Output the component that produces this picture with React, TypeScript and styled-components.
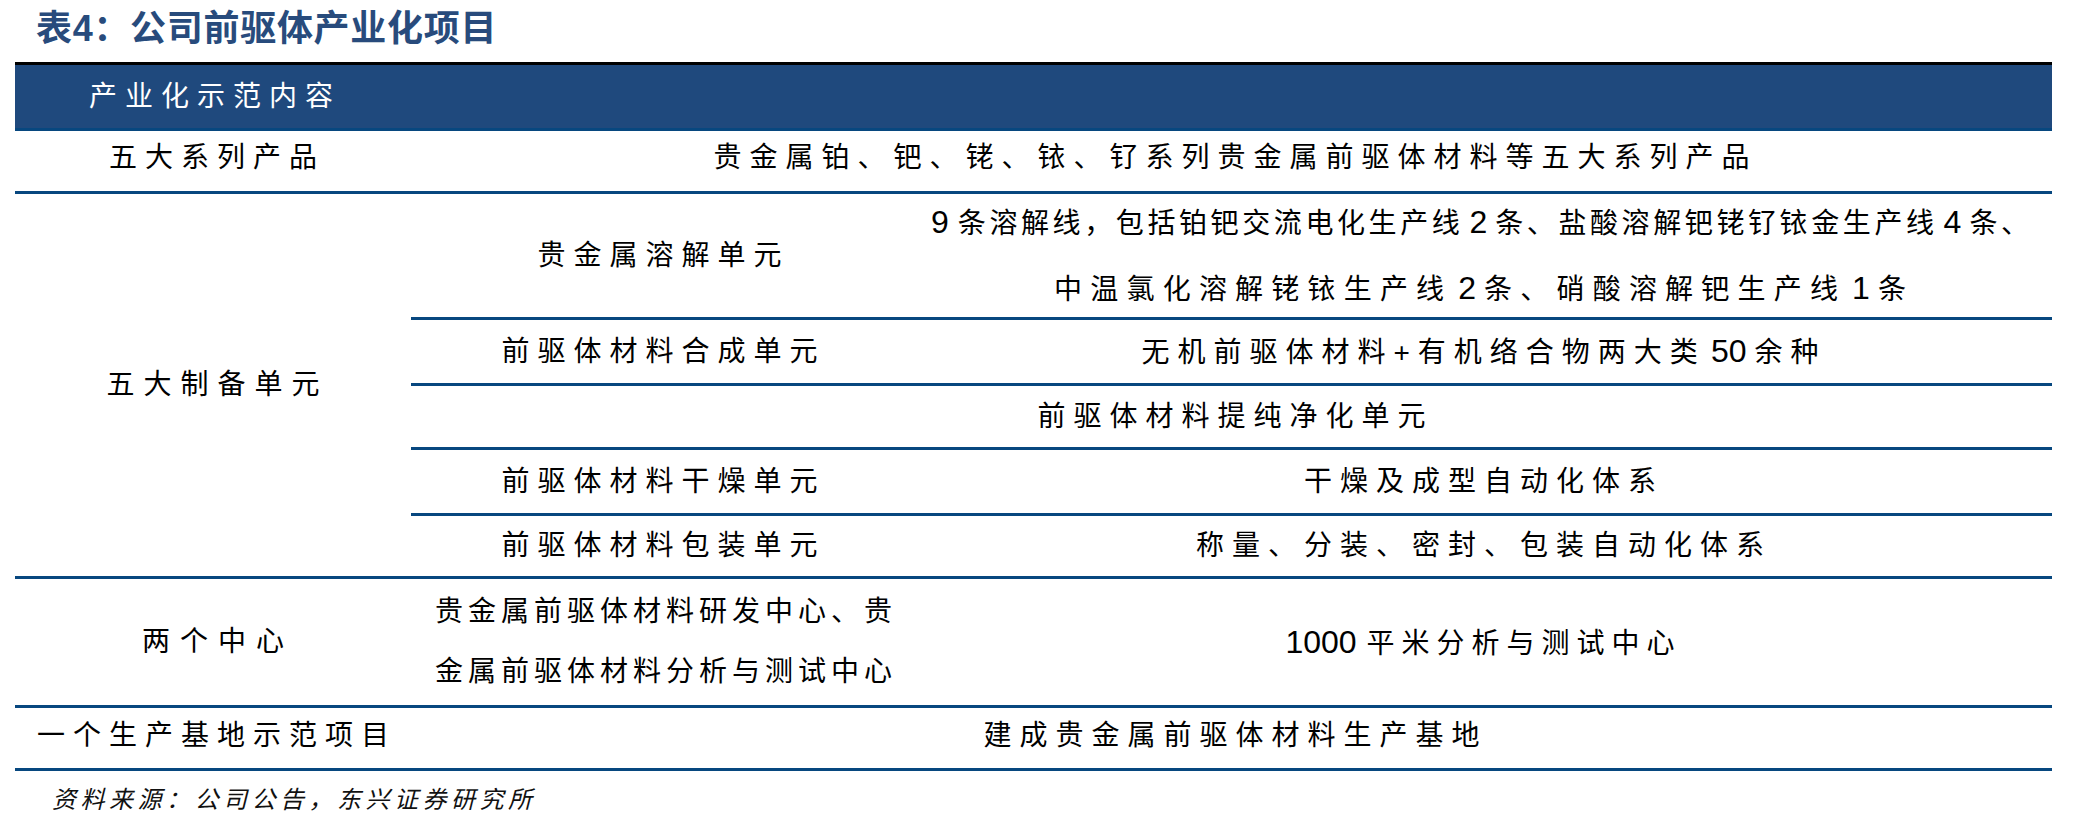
import React from 'react'
import styled, { createGlobalStyle } from 'styled-components'

const lineBlue = '#07477f'

const GlobalStyle = createGlobalStyle`
  body {
    margin: 0;
    background: #fff;
    font-family: "Liberation Sans", "Noto Sans CJK SC", sans-serif;
    color: #000;
  }
`

const Page = styled.div`
  width: 2083px;
  padding-left: 15px;
  box-sizing: border-box;
`

const Title = styled.h1`
  margin: 0;
  height: 62px;
  padding: 0 0 4px 21px;
  box-sizing: border-box;
  display: flex;
  align-items: center;
  font-size: 36px;
  font-weight: 700;
  line-height: 1.2;
  letter-spacing: 0.7px;
  color: #284b7c;
`

const Table = styled.div`
  display: grid;
  width: 2037px;
  grid-template-columns: 396px 497px 1144px;
  grid-template-rows: 66px 63px 126px 66px 64px 66px 63px 129px 63px;
  border-top: 3px solid #000;
  font-size: 28px;
  line-height: 1.2;
`

type cellProps = {
  $span?: number
  $rows?: number
  $left?: boolean
  $pad?: number
  $lift?: number
}

const Cell = styled.div<cellProps>`
  grid-column: span ${(p) => p.$span ?? 1};
  grid-row: span ${(p) => p.$rows ?? 1};
  display: flex;
  align-items: center;
  justify-content: ${(p) => (p.$left ? 'flex-start' : 'center')};
  padding-left: ${(p) => p.$pad ?? 0}px;
  padding-bottom: ${(p) => p.$lift ?? 0}px;
  border-bottom: 3px solid ${lineBlue};
  box-sizing: border-box;
`

const HeadCell = styled(Cell)`
  background: #1f497d;
  color: #fff;
`

const Text = styled.span<{ $ls?: number }>`
  display: block;
  white-space: nowrap;
  letter-spacing: ${(p) => p.$ls ?? 8}px;
  padding-left: ${(p) => p.$ls ?? 8}px;
`

// digits are set a little larger and kept tight, with a gap on each side
const Num = styled.span<{ $before?: number; $after?: number }>`
  font-size: 32px;
  letter-spacing: 0;
  padding-left: ${(p) => p.$before ?? 4}px;
  padding-right: ${(p) => p.$after ?? 8}px;
`

const Lines = styled.div<{ $lh: number; $left?: boolean }>`
  display: flex;
  flex-direction: column;
  align-items: ${(p) => (p.$left ? 'flex-start' : 'center')};
  line-height: ${(p) => p.$lh}px;
`

const Source = styled.p`
  margin: 15px 0 0 37px;
  font-size: 24px;
  line-height: 1.2;
  font-style: italic;
  letter-spacing: 4.5px;
  color: #111;
`

const App = () => (
  <Page>
    <GlobalStyle />
    <Title>表4：公司前驱体产业化项目</Title>
    <Table>
      <HeadCell $span={3} $left $pad={66}>
        <Text>产业化示范内容</Text>
      </HeadCell>

      <Cell $lift={6}>
        <Text>五大系列产品</Text>
      </Cell>
      <Cell $span={2} $lift={6}>
        <Text>贵金属铂、钯、铑、铱、钌系列贵金属前驱体材料等五大系列产品</Text>
      </Cell>

      <Cell $rows={5}>
        <Text $ls={9}>五大制备单元</Text>
      </Cell>
      <Cell>
        <Text>贵金属溶解单元</Text>
      </Cell>
      <Cell>
        <Lines $lh={65}>
          <Text $ls={3.6}>
            <Num $before={0} $after={9}>9</Num>条溶解线，包括铂钯交流电化生产线
            <Num $before={6}>2</Num>条、盐酸溶解钯铑钌铱金生产线<Num $before={6}>4</Num>条、
          </Text>
          <Text $ls={8.2}>
            中温氯化溶解铑铱生产线<Num $before={6}>2</Num>条、硝酸溶解钯生产线
            <Num $before={6}>1</Num>条
          </Text>
        </Lines>
      </Cell>

      <Cell>
        <Text>前驱体材料合成单元</Text>
      </Cell>
      <Cell>
        <Text>
          无机前驱体材料+有机络合物两大类<Num $before={5}>50</Num>余种
        </Text>
      </Cell>

      <Cell $span={2}>
        <Text>前驱体材料提纯净化单元</Text>
      </Cell>

      <Cell>
        <Text>前驱体材料干燥单元</Text>
      </Cell>
      <Cell>
        <Text>干燥及成型自动化体系</Text>
      </Cell>

      <Cell>
        <Text>前驱体材料包装单元</Text>
      </Cell>
      <Cell>
        <Text>称量、分装、密封、包装自动化体系</Text>
      </Cell>

      <Cell>
        <Text $ls={10}>两个中心</Text>
      </Cell>
      <Cell $left $pad={19}>
        <Lines $lh={60} $left>
          <Text $ls={5}>贵金属前驱体材料研发中心、贵</Text>
          <Text $ls={5}>金属前驱体材料分析与测试中心</Text>
        </Lines>
      </Cell>
      <Cell>
        <Text $ls={7}>
          <Num $before={0} $after={10}>1000</Num>平米分析与测试中心
        </Text>
      </Cell>

      <Cell $lift={4}>
        <Text>一个生产基地示范项目</Text>
      </Cell>
      <Cell $span={2} $lift={4}>
        <Text>建成贵金属前驱体材料生产基地</Text>
      </Cell>
    </Table>
    <Source>资料来源：公司公告，东兴证券研究所</Source>
  </Page>
)

export default App
